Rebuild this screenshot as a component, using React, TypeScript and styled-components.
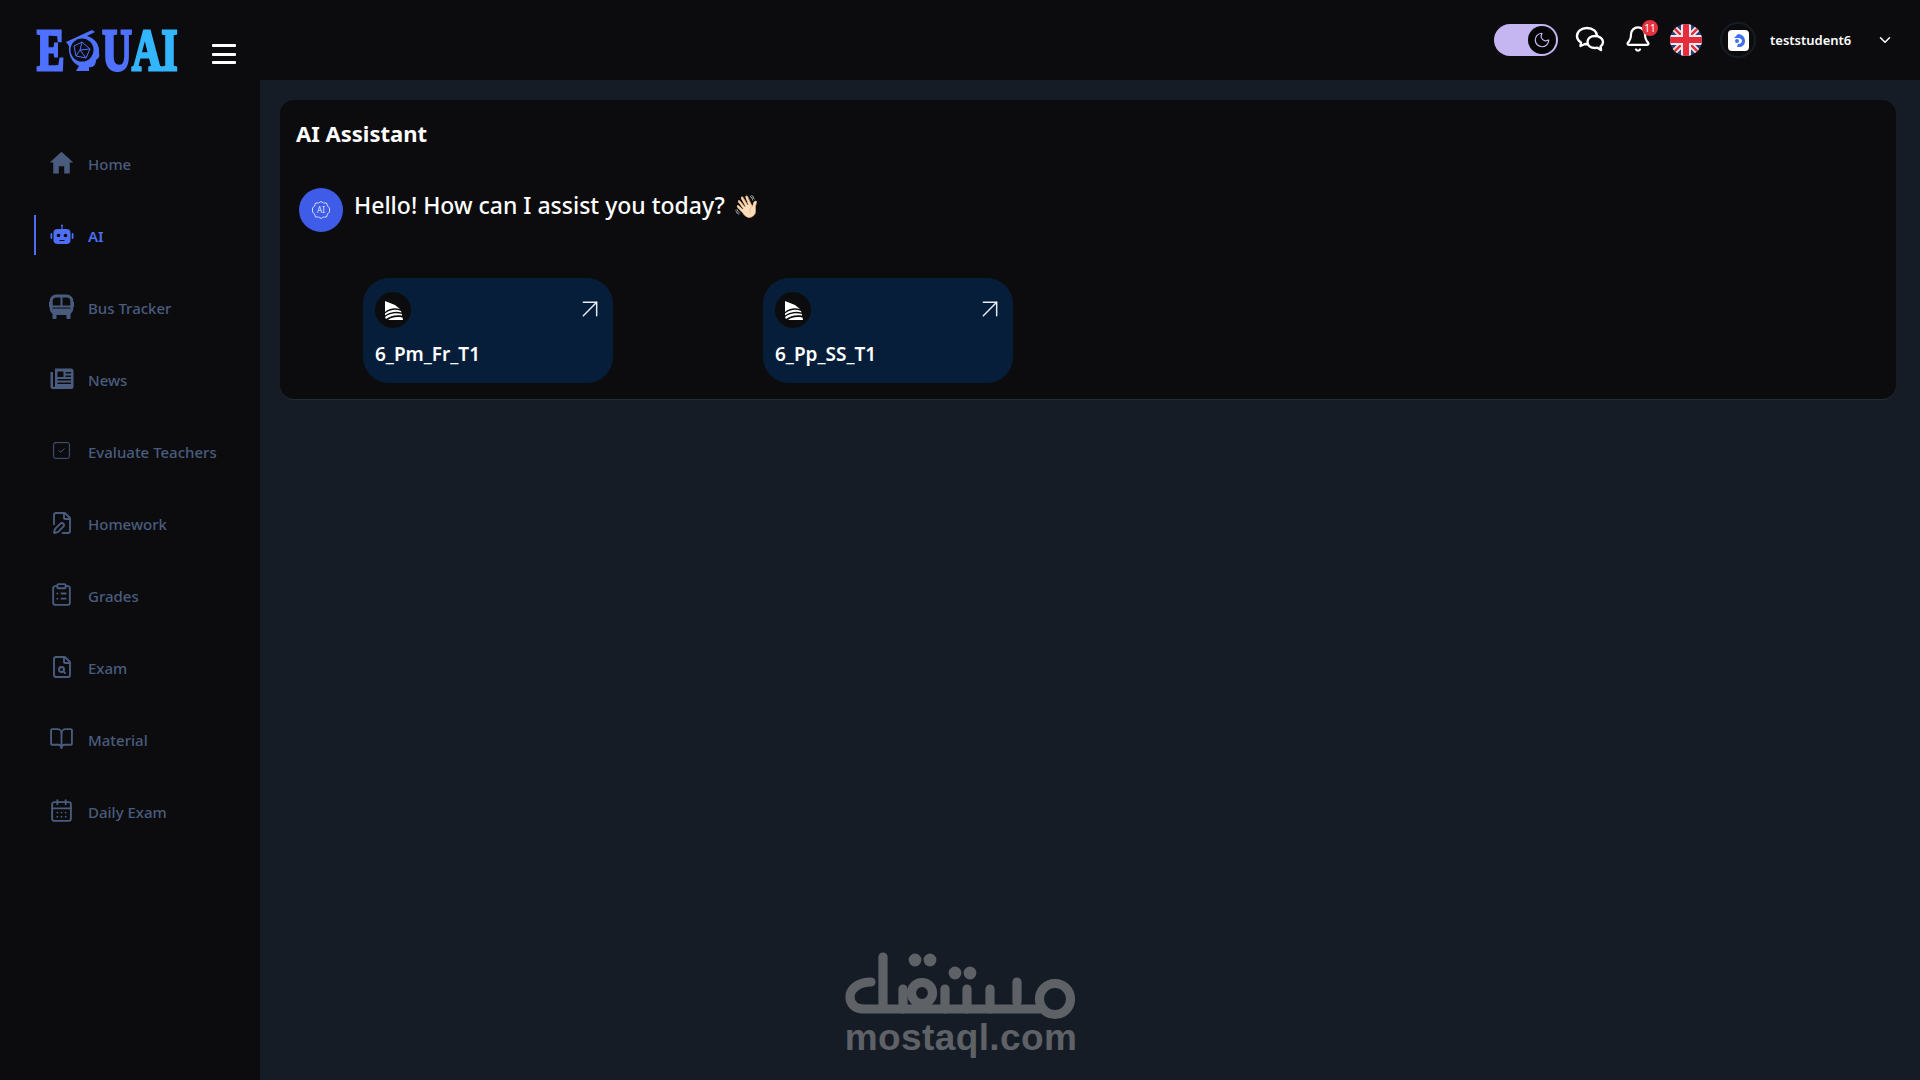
import React from "react";
import styled, { createGlobalStyle } from "styled-components";
import {
  ArrowUpRight,
  Bell,
  BookOpen,
  CalendarDays,
  ChevronDown,
  ClipboardList,
  FilePen,
  FileSearch,
  Moon,
  SquareCheck,
} from "lucide-react";
import { IoMdHome } from "react-icons/io";

const GlobalStyle = createGlobalStyle`
  html, body {
    margin: 0;
    height: 100%;
    background: #161c26;
    font-family: "Noto Sans", "Open Sans", sans-serif;
  }
  * {
    box-sizing: border-box;
  }
`;

const Page = styled.div`
  position: relative;
  display: grid;
  grid-template-columns: 260px 1fr;
  grid-template-rows: 80px 1fr;
  width: 1920px;
  height: 1080px;
  overflow: hidden;
`;

const Brand = styled.div`
  background: #0c0c0e;
  display: flex;
  align-items: flex-start;
  padding: 30px 0 0 37px;
`;

const LogoWord = styled.div`
  display: flex;
  align-items: center;
  width: 141px;
  height: 41px;
  font-family: "Liberation Serif", serif;
  font-weight: 700;
  font-size: 41px;
  line-height: 41px;
  flex-shrink: 0;
`;

const LogoPart = styled.span<{ $light?: boolean }>`
  display: inline-block;
  transform: scaleY(1.42);
  color: ${(props) => (props.$light ? "#33b5ff" : "#4f71ff")};
  -webkit-text-stroke: 2.2px ${(props) => (props.$light ? "#33b5ff" : "#4f71ff")};
`;

const LogoHead = styled.svg`
  flex-shrink: 0;
  margin: 0 2px 0 0;
`;

const Burger = styled.button`
  display: flex;
  flex-direction: column;
  gap: 5.5px;
  width: 24px;
  flex-shrink: 0;
  padding: 0;
  margin: 14px 0 0 34px;
  background: none;
  border: none;

  span {
    display: block;
    height: 3px;
    background: #ffffff;
    border-radius: 1px;
  }
`;

const TopBar = styled.header`
  background: #0c0c0e;
  display: flex;
  align-items: flex-start;
  justify-content: flex-end;
  padding: 22px 26px 0 0;
`;

const Toggle = styled.div`
  width: 64px;
  height: 32px;
  margin-top: 2px;
  padding: 2px;
  border-radius: 16px;
  background: #c5b5f0;
  display: flex;
  justify-content: flex-end;
`;

const Knob = styled.div`
  width: 28px;
  height: 28px;
  border-radius: 50%;
  background: #050505;
  color: #c5b5f0;
  display: flex;
  align-items: center;
  justify-content: center;
`;

const ChatIcon = styled.svg`
  margin: 3px 0 0 17px;
  flex-shrink: 0;
`;

const BellButton = styled.div`
  position: relative;
  color: #ffffff;
  display: flex;
  margin: 3px 0 0 19px;
`;

const BellBadge = styled.span`
  position: absolute;
  top: -5px;
  right: -6px;
  width: 16px;
  height: 16px;
  border-radius: 50%;
  background: #e8313f;
  color: #ffffff;
  font-size: 10px;
  line-height: 16px;
  text-align: center;
`;

const Flag = styled.svg`
  width: 32px;
  height: 32px;
  margin: 2px 0 0 18px;
  border-radius: 50%;
`;

const AvatarRing = styled.div`
  width: 36px;
  height: 36px;
  margin-left: 18px;
  border-radius: 50%;
  border: 2px solid #161c26;
  display: flex;
  align-items: center;
  justify-content: center;
`;

const AvatarTile = styled.div`
  width: 21px;
  height: 21px;
  border-radius: 4px;
  background: #ffffff;
  display: flex;
  align-items: center;
  justify-content: center;
`;

const UserName = styled.span`
  margin-left: 14px;
  width: 106px;
  color: #ffffff;
  font-size: 13px;
  font-weight: 600;
  line-height: 36px;
`;

const Chevron = styled.div`
  color: #ffffff;
  display: flex;
  margin-top: 9px;
`;

const Sidebar = styled.nav`
  background: #0c0c0e;
  padding: 48px 0 0 34px;
  display: flex;
  flex-direction: column;
`;

const NavItem = styled.a<{ $active?: boolean }>`
  display: flex;
  align-items: center;
  height: 72px;
  gap: 14px;
  color: ${(props) => (props.$active ? "#4f6ef7" : "#4a5c7e")};
  font-size: 15px;
  font-weight: ${(props) => (props.$active ? 600 : 500)};
  position: relative;
  padding-left: 15px;

  &::before {
    content: "";
    display: ${(props) => (props.$active ? "block" : "none")};
    position: absolute;
    left: 0;
    top: 15px;
    width: 2px;
    height: 40px;
    background: #4f6ef7;
  }
`;

const NavIcon = styled.span`
  width: 25px;
  height: 25px;
  margin-top: -3px;
  display: flex;
  align-items: center;
  justify-content: center;

  svg {
    flex-shrink: 0;
  }
`;

const Main = styled.main`
  padding: 20px 24px 0 20px;
`;

const Card = styled.section`
  background: #0c0c0e;
  border-radius: 14px;
  height: 299px;
  padding: 15px 16px 0;
  box-shadow: 0 1px 0 #252c38;
`;

const Title = styled.h1`
  margin: 0;
  color: #ffffff;
  font-size: 22px;
  font-weight: 700;
  line-height: 36px;
`;

const Greeting = styled.div`
  display: flex;
  align-items: flex-start;
  gap: 11px;
  margin: 36px 0 0 3px;
`;

const BotAvatar = styled.div`
  width: 44px;
  height: 44px;
  margin-top: 1px;
  border-radius: 50%;
  background: #3f5ce8;
  display: flex;
  align-items: center;
  justify-content: center;
`;

const GreetingText = styled.p`
  margin: 0;
  color: #ffffff;
  font-size: 23px;
  font-weight: 500;
  line-height: 36px;
`;

const Wave = styled.span`
  font-size: 22px;
  margin-left: 8px;
`;

const Chips = styled.div`
  display: flex;
  gap: 150px;
  margin: 46px 0 0 67px;
`;

const Chip = styled.div`
  width: 250px;
  height: 105px;
  background: #071e3b;
  border-radius: 26px;
  padding: 14px 7px 14px 12px;
`;

const ChipTop = styled.div`
  display: flex;
  align-items: flex-start;
  justify-content: space-between;
  color: #e8ebf0;

  svg {
    margin-top: 1px;
  }
`;

const ChipIcon = styled.div`
  width: 36px;
  height: 36px;
  border-radius: 50%;
  background: #0c0c0e;
  display: flex;
  align-items: center;
  justify-content: center;
`;

const ChipName = styled.div`
  margin-top: 12px;
  color: #ffffff;
  font-size: 19px;
  font-weight: 600;
  line-height: 28px;
`;

const Watermark = styled.div`
  position: absolute;
  left: 845px;
  top: 952px;
  width: 232px;
  color: #5e6267;
  display: flex;
  flex-direction: column;
  align-items: center;
`;

const WatermarkText = styled.span`
  font-family: "Liberation Sans", sans-serif;
  font-size: 37px;
  font-weight: 700;
  line-height: 34px;
  letter-spacing: 0.4px;
  margin-top: 1px;
`;

const navItems = [
  { label: "Home", icon: <IoMdHome size={29} /> },
  {
    label: "AI",
    active: true,
    icon: (
      <svg width="24" height="24" viewBox="0 0 24 24" fill="currentColor">
        <rect x="3.5" y="6" width="17" height="15" rx="4" />
        <rect x="11.4" y="2" width="1.2" height="4" />
        <circle cx="12" cy="2.4" r="1" />
        <rect x="0.5" y="10" width="1.8" height="6" rx="0.9" />
        <rect x="21.7" y="10" width="1.8" height="6" rx="0.9" />
        <circle cx="8.5" cy="12.5" r="1.8" fill="#0c0c0e" />
        <circle cx="15.5" cy="12.5" r="1.8" fill="#0c0c0e" />
        <rect x="9.5" y="17" width="5" height="1" fill="#0c0c0e" />
      </svg>
    ),
  },
  {
    label: "Bus Tracker",
    icon: (
      <svg width="25" height="25" viewBox="0 0 25 25" fill="none" stroke="currentColor">
        <rect x="2.2" y="2" width="20.6" height="17.5" rx="5" strokeWidth="3" />
        <path d="M3 12.5 H22 M12.5 3 V12.5" strokeWidth="2" />
        <path d="M0.6 8 V13 M24.4 8 V13" strokeWidth="1.2" />
        <path d="M5.5 20 V23.5 M19.5 20 V23.5" strokeWidth="4" strokeLinecap="round" />
        <rect x="4" y="14.5" width="17" height="3.5" fill="currentColor" stroke="none" />
      </svg>
    ),
  },
  {
    label: "News",
    icon: (
      <svg width="24" height="24" viewBox="0 0 24 24" fill="currentColor">
        <path d="M5 1.5 H21 A2.5 2.5 0 0 1 23.5 4 V19.5 A2.5 2.5 0 0 1 21 22 H3 A2.5 2.5 0 0 1 0.5 19.5 V5 H3 V19 A1 1 0 0 0 5 19 Z" />
        <rect x="7.5" y="4.5" width="6" height="5.5" fill="#0c0c0e" />
        <rect x="15.5" y="5" width="5.5" height="1.5" fill="#0c0c0e" />
        <rect x="15.5" y="8.5" width="5.5" height="1.5" fill="#0c0c0e" />
        <rect x="7.5" y="12" width="13.5" height="1.5" fill="#0c0c0e" />
        <rect x="7.5" y="15.5" width="13.5" height="1.5" fill="#0c0c0e" />
      </svg>
    ),
  },
  { label: "Evaluate Teachers", icon: <SquareCheck size={21} strokeWidth={1.1} /> },
  { label: "Homework", icon: <FilePen size={24} strokeWidth={1.9} /> },
  { label: "Grades", icon: <ClipboardList size={25} strokeWidth={1.8} /> },
  { label: "Exam", icon: <FileSearch size={24} strokeWidth={1.9} /> },
  { label: "Material", icon: <BookOpen size={25} strokeWidth={1.8} /> },
  { label: "Daily Exam", icon: <CalendarDays size={25} strokeWidth={1.8} /> },
];

function SailIcon() {
  return (
    <svg width="20" height="22" viewBox="0 0 20 22" fill="#ffffff">
      <path d="M2 1 L12 5 L17 9 C11 7.5 6 8.5 2 12 Z" />
      <path d="M2 13.5 C7 9.5 13 9 18 11 L18.5 12.5 C13 11 7 12 2 15.5 Z" />
      <path d="M2 17 C7 13 13 12.5 19 14 L19 15.5 C13 14.5 7 15.5 3 19 Z" />
      <path d="M5 20 C9 17 14 16.5 19.5 17.5 L20 20 Z" />
    </svg>
  );
}

function MostaqlMark() {
  return (
    <svg width="232" height="68" viewBox="0 0 232 68" fill="none" stroke="currentColor" strokeWidth="9.2" strokeLinecap="round">
      <path d="M38 5 V57 M26 30 C12 30 5 38 5 45 C5 53 11 57 20 57 H196" />
      <path d="M58 37 V57" />
      <circle cx="77" cy="41" r="10.5" />
      <circle cx="70" cy="8" r="6.4" fill="currentColor" stroke="none" />
      <circle cx="85" cy="8" r="6.4" fill="currentColor" stroke="none" />
      <path d="M100 37 V57 M122 37 V57 M145 37 V57 M172 30 V50" />
      <circle cx="110" cy="21" r="6.4" fill="currentColor" stroke="none" />
      <circle cx="125" cy="21" r="6.4" fill="currentColor" stroke="none" />
      <circle cx="210" cy="47" r="15.5" />
    </svg>
  );
}

function App() {
  return (
    <>
      <GlobalStyle />
      <Page>
        <Brand>
          <LogoWord>
            <LogoPart>E</LogoPart>
            <LogoHead width="36" height="41" viewBox="0 0 36 41">
              <path d="M2 12 L28 0 L31 2 L23 6 C31 8 36 15 35 23 C36 26 35 28 32 30 C32 35 29 38 25 37 L25 41 L12 41 L15 36 C8 33 4 24 5 16 Z" fill="#4f71ff" />
              <circle cx="18" cy="20" r="11.5" fill="#0c0c0e" />
              <path d="M10 16 L18 12 L26 19 L22 28 L12 26 Z M18 12 L16 20 L26 19 M16 20 L12 26 M16 20 L22 28" fill="none" stroke="#4f71ff" strokeWidth="1" />
            </LogoHead>
            <LogoPart>U</LogoPart>
            <LogoPart $light>AI</LogoPart>
          </LogoWord>
          <Burger>
            <span />
            <span />
            <span />
          </Burger>
        </Brand>
        <TopBar>
          <Toggle>
            <Knob>
              <Moon size={18} strokeWidth={1.6} />
            </Knob>
          </Toggle>
          <ChatIcon width="30" height="28" viewBox="0 0 30 28" fill="#0c0c0e" stroke="#ffffff" strokeWidth="2.4" strokeLinejoin="round">
            <path d="M12 3 C6 3 2 6.5 2 11 C2 14 3.5 16 6 17.5 L5.5 21 L10 19 C11 19.2 12 19.3 13 19.3 C18.5 19.3 22 15.5 22 11 C22 6.5 18 3 12 3 Z" />
            <path d="M20 11 C15.5 11 12.5 13.5 12.5 17 C12.5 20.5 15.5 23 20 23 C21 23 21.6 22.9 22.4 22.7 L26 25 L25.6 21.4 C27.2 20.3 28 18.7 28 17 C28 13.5 24.5 11 20 11 Z" />
          </ChatIcon>
          <BellButton>
            <Bell size={28} strokeWidth={1.9} />
            <BellBadge>11</BellBadge>
          </BellButton>
          <Flag viewBox="0 0 32 32">
            <rect width="32" height="32" fill="#2c3f7c" />
            <path d="M0 0 L32 32 M32 0 L0 32" stroke="#f0e9e9" strokeWidth="6" />
            <path d="M0 0 L32 32 M32 0 L0 32" stroke="#e52d3e" strokeWidth="2.4" />
            <path d="M16 0 V32 M0 16 H32" stroke="#f0e9e9" strokeWidth="10" />
            <path d="M16 0 V32 M0 16 H32" stroke="#e52d3e" strokeWidth="6" />
          </Flag>
          <AvatarRing>
            <AvatarTile>
              <svg width="15" height="15" viewBox="0 0 15 15" fill="#3f6ff0">
                <path d="M7 1 C11 1 14 4 14 8 C14 12 11 14 8 14 L6 14 L7 11 C9 11 11 10 11 8 C11 6 9 5 7 5 L3 5 Z" />
                <circle cx="6" cy="8" r="2" />
              </svg>
            </AvatarTile>
          </AvatarRing>
          <UserName>teststudent6</UserName>
          <Chevron>
            <ChevronDown size={18} strokeWidth={2} />
          </Chevron>
        </TopBar>
        <Sidebar>
          {navItems.map((item) => (
            <NavItem key={item.label} $active={item.active}>
              <NavIcon>{item.icon}</NavIcon>
              {item.label}
            </NavItem>
          ))}
        </Sidebar>
        <Main>
          <Card>
            <Title>AI Assistant</Title>
            <Greeting>
              <BotAvatar>
                <svg width="20" height="20" viewBox="0 0 20 20" fill="none" stroke="#dfe5ff" strokeWidth="0.9">
                  <path d="M10 1.5 L12.5 3 L15.5 3 L16.5 6 L18.5 8 L18.5 12 L16.5 14 L15.5 17 L12.5 17 L10 18.5 L7.5 17 L4.5 17 L3.5 14 L1.5 12 L1.5 8 L3.5 6 L4.5 3 L7.5 3 Z" strokeLinejoin="round" />
                  <text x="10" y="13" textAnchor="middle" fontSize="8" fontFamily="Noto Sans, sans-serif" fill="#dfe5ff" stroke="none">AI</text>
                </svg>
              </BotAvatar>
              <GreetingText>
                Hello! How can I assist you today?<Wave>👋🏻</Wave>
              </GreetingText>
            </Greeting>
            <Chips>
              {["6_Pm_Fr_T1", "6_Pp_SS_T1"].map((name) => (
                <Chip key={name}>
                  <ChipTop>
                    <ChipIcon>
                      <SailIcon />
                    </ChipIcon>
                    <ArrowUpRight size={32} strokeWidth={1.1} />
                  </ChipTop>
                  <ChipName>{name}</ChipName>
                </Chip>
              ))}
            </Chips>
          </Card>
        </Main>
        <Watermark>
          <MostaqlMark />
          <WatermarkText>mostaql.com</WatermarkText>
        </Watermark>
      </Page>
    </>
  );
}

export default App;
